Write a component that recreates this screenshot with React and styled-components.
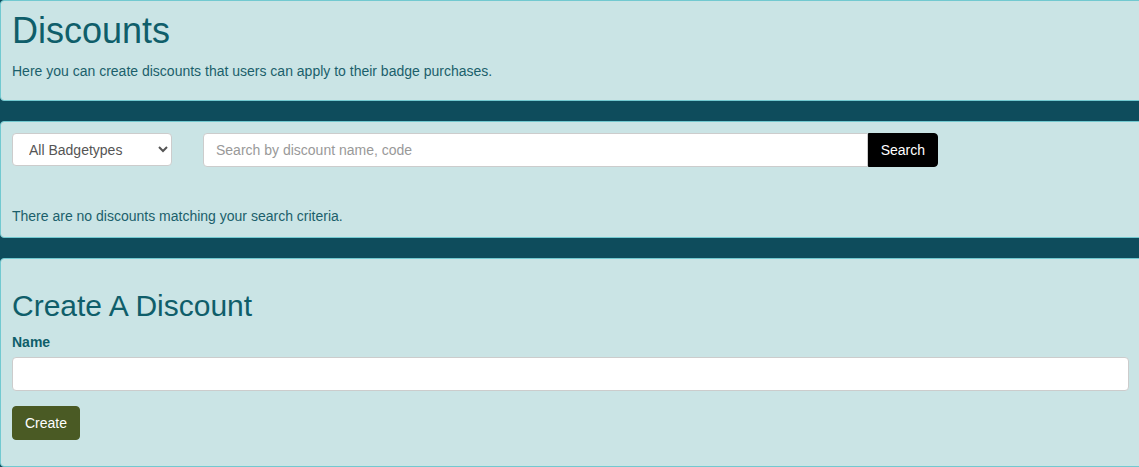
import React from 'react'
import styled, { createGlobalStyle } from 'styled-components'

const GlobalStyle = createGlobalStyle`
  html, body {
    margin: 0;
    padding: 0;
    overflow: hidden;
    background: #0e4c5c;
    font-family: 'Liberation Sans', Arial, sans-serif;
    font-size: 14px;
    line-height: 1.42857;
  }
  * {
    box-sizing: border-box;
  }
`

const Page = styled.main`
  display: flex;
  flex-direction: column;
  gap: 20px;
  margin-right: -4px;
`

const Panel = styled.section`
  background: #cae4e5;
  border: 1px solid #72c9d0;
  border-radius: 4px;
  padding: ${(p) => p.$pad || '10px 11px'};
  color: #17606b;
`

const Title = styled.h1`
  margin: 0 0 11px;
  font-size: 36px;
  font-weight: 400;
  line-height: 1.1;
  color: #0f5e6a;
`

const SubTitle = styled.h2`
  margin: 20px 0 11px;
  font-size: 30px;
  font-weight: 400;
  line-height: 1.1;
  color: #0f5e6a;
`

const Text = styled.p`
  margin: ${(p) => p.$margin || '0 0 10px'};
  color: #1b5f6b;
`

const Toolbar = styled.div`
  display: flex;
  align-items: center;
  gap: 31px;
`

const Select = styled.select`
  width: 160px;
  height: 33px;
  padding: 6px 8px 6px 12px;
  font-family: inherit;
  font-size: 14px;
  color: #555;
  background: #fff;
  border: 1px solid #ccc;
  border-radius: 4px;
`

const InputGroup = styled.div`
  display: flex;
  width: 735px;
`

const Input = styled.input`
  flex: 1;
  width: 100%;
  height: 34px;
  padding: 6px 12px;
  font-family: inherit;
  font-size: 14px;
  color: #555;
  background: #fff;
  border: 1px solid #ccc;
  border-radius: ${(p) => (p.$joined ? '4px 0 0 4px' : '4px')};
  &::placeholder {
    color: #999;
  }
`

const Button = styled.button`
  height: 34px;
  padding: 6px 12px;
  font-family: inherit;
  font-size: 14px;
  color: #fff;
  background: ${(p) => p.$bg};
  border: 1px solid ${(p) => p.$bg};
  border-radius: ${(p) => (p.$joined ? '0 4px 4px 0' : '4px')};
  cursor: pointer;
`

const Label = styled.label`
  display: block;
  margin-bottom: 4px;
  font-weight: 700;
  color: #0f5e6a;
`

const FormGroup = styled.div`
  margin-bottom: 15px;
`

export default function App() {
  return (
    <>
      <GlobalStyle />
      <Page>
        <Panel $pad="10px 11px 8px">
          <Title>Discounts</Title>
          <Text>Here you can create discounts that users can apply to their badge purchases.</Text>
        </Panel>

        <Panel $pad="11px 11px 0">
          <Toolbar>
            <Select defaultValue="all">
              <option value="all">All Badgetypes</option>
            </Select>
            <InputGroup>
              <Input $joined placeholder="Search by discount name, code" />
              <Button $joined $bg="#000">Search</Button>
            </InputGroup>
          </Toolbar>
          <Text $margin="40px 0 10px">There are no discounts matching your search criteria.</Text>
        </Panel>

        <Panel $pad="10px 13px 26px 11px">
          <SubTitle>Create A Discount</SubTitle>
          <FormGroup>
            <Label htmlFor="name">Name</Label>
            <Input id="name" />
          </FormGroup>
          <Button $bg="#4a5a24">Create</Button>
        </Panel>
      </Page>
    </>
  )
}
